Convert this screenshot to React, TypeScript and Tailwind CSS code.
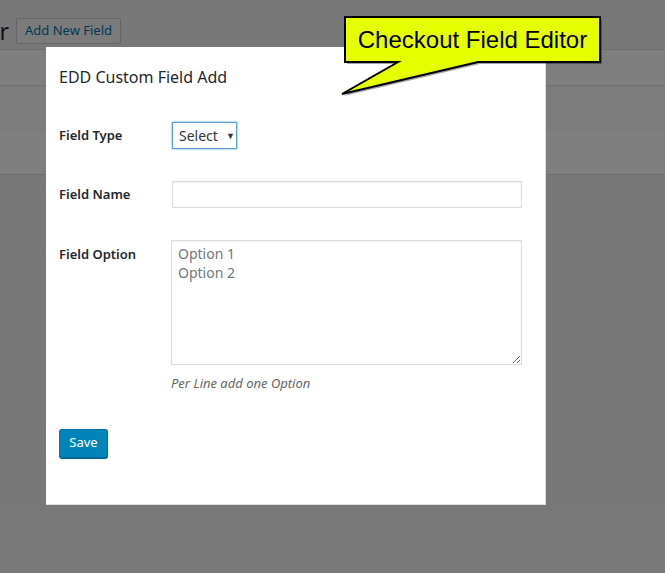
import React from 'react';

const font = { fontFamily: '"Noto Sans", "Open Sans", sans-serif' };

const Callout = () => (
  <div className="absolute left-0 top-0 pointer-events-none">
    <svg width="665" height="110" className="block">
      <path d="M347,19 H602 V64 H480 L344,96 L400,64 H347 Z" fill="rgba(0,0,0,0.35)" />
      <path d="M345,17 H600 V62 H478 L342,94 L398,62 H345 Z" fill="#e5ff00" stroke="#000" strokeWidth="2" strokeLinejoin="miter" />
    </svg>
    <div
      className="absolute left-[345px] top-[17px] w-[255px] h-[45px] flex items-center justify-center text-[24px] text-black"
      style={{ fontFamily: '"Liberation Sans", Arial, sans-serif' }}
    >
      Checkout Field Editor
    </div>
  </div>
);

const AdminPage = () => (
  <div className="min-h-[573px] bg-[#f1f1f1]">
    {/* Heading row */}
    <div className="flex items-center h-[49px] pt-[13px]">
      <div className="w-[9px] overflow-hidden flex justify-end">
        <h1 className="text-[23px] text-[#23282d] whitespace-nowrap leading-none">Checkout Field Editor</h1>
      </div>
      <button className="ml-[7px] h-[26px] px-[8px] border border-[#ccc] rounded-[2px] bg-[#f7f7f7] text-[13px] text-[#0073aa]">
        Add New Field
      </button>
    </div>
    {/* Table behind the modal */}
    <div className="border-t border-[#e1e1e1]">
      <div className="h-[36px] bg-white border-b border-[#e1e1e1]" />
      <div className="h-[45px] bg-[#f9f9f9]" />
      <div className="h-[44px] bg-white border-b border-[#e1e1e1]" />
    </div>
  </div>
);

const Modal = () => (
  <div className="absolute left-[46px] top-[47px] w-[500px] h-[458px] bg-white border-r border-b border-[#dcdcdc] pl-[13px] pr-[23px]">
    <h2 className="pt-[18px] text-[16px] leading-[24px] text-[#23282d]">EDD Custom Field Add</h2>

    <div className="mt-[33px] flex items-center">
      <label className="w-[113px] text-[13px] font-semibold text-[#23282d]">Field Type</label>
      <div className="h-[27px] w-[65px] border border-[#5b9dd9] shadow-[0_0_2px_rgba(30,140,190,0.8)] flex items-center pl-[6px] text-[14px] text-[#32373c]">
        <span>Select</span>
        <span className="ml-[8px] text-[9px]">▼</span>
      </div>
    </div>

    <div className="mt-[32px] flex items-center">
      <label className="w-[113px] text-[13px] font-semibold text-[#23282d]">Field Name</label>
      <input className="h-[27px] w-[350px] border border-[#ddd] shadow-[inset_0_1px_2px_rgba(0,0,0,0.07)] outline-none" />
    </div>

    <div className="mt-[32px] flex items-start">
      <label className="w-[112px] pt-[5px] text-[13px] font-semibold text-[#23282d]">Field Option</label>
      <div className="flex flex-col">
        <textarea
          className="h-[125px] w-[351px] border border-[#ddd] shadow-[inset_0_1px_2px_rgba(0,0,0,0.07)] px-[6px] pt-[3px] text-[14px] leading-[19px] text-[#32373c] placeholder:text-[#72777c] outline-none"
          style={font}
          placeholder={'Option 1\nOption 2'}
        />
        <p className="mt-[9px] text-[13px] italic text-[#666]">Per Line add one Option</p>
      </div>
    </div>

    <button className="mt-[35px] h-[29px] w-[49px] rounded-[3px] bg-[#0085ba] border border-[#0073aa] border-b-[#006799] shadow-[0_1px_0_#006799] text-[13px] text-white">
      Save
    </button>
  </div>
);

export default function App() {
  return (
    <div className="relative w-[665px] h-[573px] overflow-hidden" style={font}>
      <AdminPage />
      <div className="absolute inset-0 bg-black/50" />
      <Modal />
      <Callout />
    </div>
  );
}
